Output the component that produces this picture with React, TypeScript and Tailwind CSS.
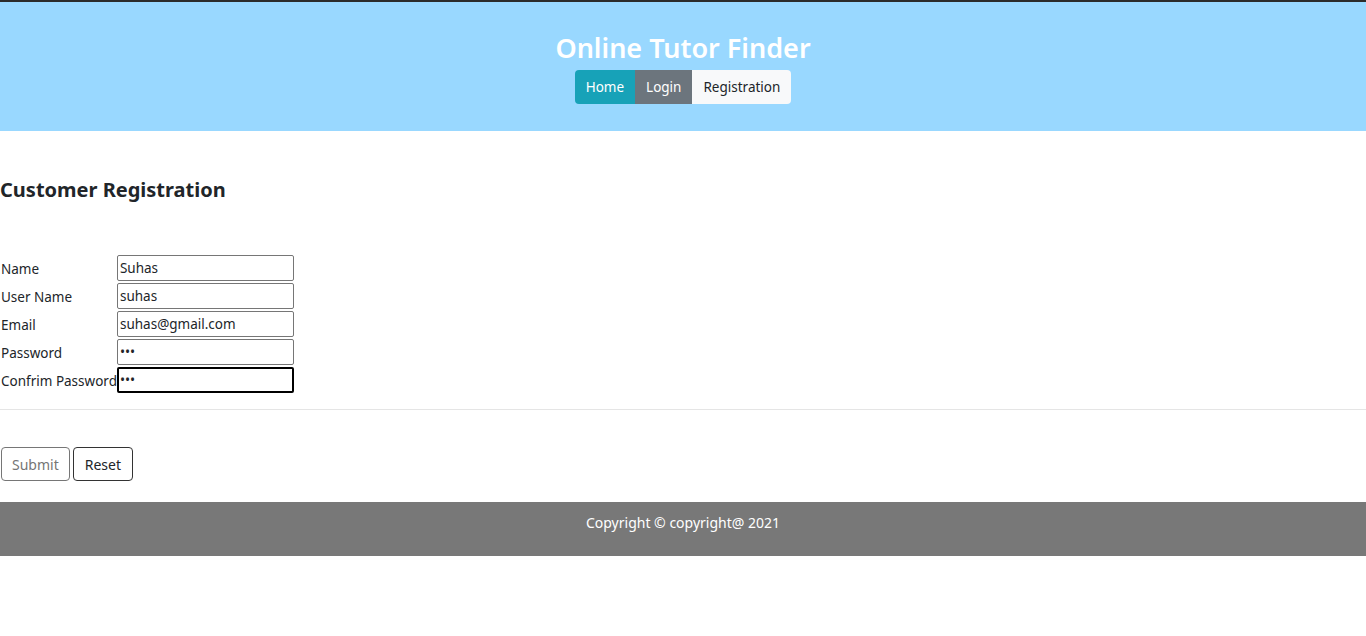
import { useState } from "react";

const FONT = "font-['Segoe_UI','Noto_Sans','Open_Sans',sans-serif]";

const fields = [
  { label: "Name", type: "text", value: "Suhas" },
  { label: "User Name", type: "text", value: "suhas" },
  { label: "Email", type: "text", value: "suhas@gmail.com" },
  { label: "Password", type: "password", value: "abc" },
  { label: "Confrim Password", type: "password", value: "abc" },
];

function Header() {
  return (
    <header className="border-t-2 border-[#2b2b2b] bg-[#99d8ff] pt-[29px] pb-[27px] text-center">
      <h1 className="text-[27px] font-semibold leading-[34px] text-white">Online Tutor Finder</h1>
      <nav className="mt-[5px] inline-flex overflow-hidden rounded-[4px] text-[13.5px]">
        <a className="bg-[#17a2b8] px-[11px] py-[6px] leading-[22px] text-white">Home</a>
        <a className="bg-[#6c757d] px-[11px] py-[6px] leading-[22px] text-white">Login</a>
        <a className="bg-[#f8f9fa] px-[11px] py-[6px] leading-[22px] text-[#212529]">Registration</a>
      </nav>
    </header>
  );
}

export default function App() {
  const [values, setValues] = useState(fields.map((f) => f.value));

  return (
    <div className={`${FONT} bg-white text-[#212529]`}>
      <Header />

      <main className="pt-[45px]">
        <h4 className="text-[20px] font-bold leading-[28px]">Customer Registration</h4>

        <table className="mt-[49px] border-separate border-spacing-y-[2px] text-[13.5px]">
          <tbody>
            {fields.map((f, i) => (
              <tr key={f.label}>
                <td className="pl-[1px] pr-0 pt-[2px] align-middle whitespace-nowrap">{f.label}</td>
                <td>
                  <input
                    type={f.type}
                    value={values[i]}
                    onChange={(e) => {
                      const next = [...values];
                      next[i] = e.target.value;
                      setValues(next);
                    }}
                    className={
                      i === fields.length - 1
                        ? "h-[26px] w-[177px] rounded-[2px] border-2 border-black px-[1px] text-[13.5px] outline-none"
                        : "h-[26px] w-[177px] rounded-[2px] border border-[#767676] px-[2px] text-[13.5px] outline-none"
                    }
                  />
                </td>
              </tr>
            ))}
          </tbody>
        </table>

        <hr className="mt-[14px] border-[#e5e5e5]" />

        <div className="flex gap-[3px] pt-[37px] pb-[21px] pl-[1px] text-[14px]">
          <button className="h-[34px] rounded-[4px] border border-[#767676] px-[10px] text-[#757575]">Submit</button>
          <button className="h-[34px] rounded-[4px] border border-[#333] px-[11px] text-[#212529]">Reset</button>
        </div>
      </main>

      <footer className="h-[54px] bg-[#787878] pt-[10px] text-center text-[14px] text-white">
        Copyright © copyright@ 2021
      </footer>
    </div>
  );
}
